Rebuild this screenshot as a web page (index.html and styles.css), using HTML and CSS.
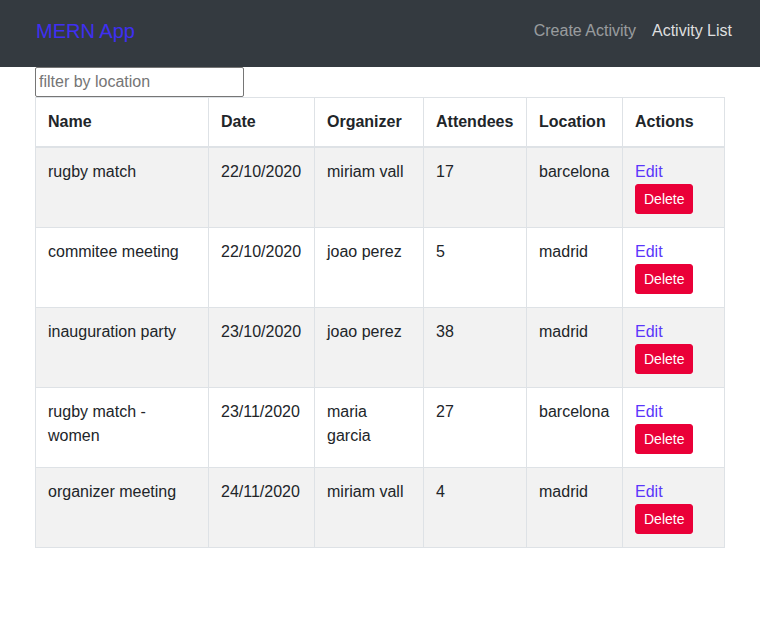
FILE: index.html
```html
<!DOCTYPE html>
<html lang="en">
<head>
<meta charset="utf-8">
<title>MERN App</title>
<link rel="stylesheet" href="styles.css">
</head>
<body>
<nav class="navbar">
  <a class="brand" href="#">MERN App</a>
  <div class="nav-links">
    <a class="nav-link" href="#">Create Activity</a>
    <a class="nav-link active" href="#">Activity List</a>
  </div>
</nav>
<main class="content">
  <input class="filter" type="text" placeholder="filter by location">
  <table class="table">
    <colgroup>
      <col class="c-name"><col class="c-date"><col class="c-org"><col class="c-att"><col class="c-loc"><col class="c-act">
    </colgroup>
    <thead>
      <tr><th>Name</th><th>Date</th><th>Organizer</th><th>Attendees</th><th>Location</th><th>Actions</th></tr>
    </thead>
    <tbody>
      <tr><td>rugby match</td><td>22/10/2020</td><td>miriam vall</td><td>17</td><td>barcelona</td><td><a class="edit" href="#">Edit</a><br><button class="btn-delete">Delete</button></td></tr>
      <tr><td>commitee meeting</td><td>22/10/2020</td><td>joao perez</td><td>5</td><td>madrid</td><td><a class="edit" href="#">Edit</a><br><button class="btn-delete">Delete</button></td></tr>
      <tr><td>inauguration party</td><td>23/10/2020</td><td>joao perez</td><td>38</td><td>madrid</td><td><a class="edit" href="#">Edit</a><br><button class="btn-delete">Delete</button></td></tr>
      <tr><td>rugby match - women</td><td>23/11/2020</td><td>maria garcia</td><td>27</td><td>barcelona</td><td><a class="edit" href="#">Edit</a><br><button class="btn-delete">Delete</button></td></tr>
      <tr><td>organizer meeting</td><td>24/11/2020</td><td>miriam vall</td><td>4</td><td>madrid</td><td><a class="edit" href="#">Edit</a><br><button class="btn-delete">Delete</button></td></tr>
    </tbody>
  </table>
</main>
</body>
</html>
```
FILE: styles.css
```css
* { box-sizing: border-box; }
html, body { margin: 0; padding: 0; }
body {
  font-family: "Liberation Sans", Arial, sans-serif;
  font-size: 16px;
  line-height: 1.5;
  color: #212529;
  background: #fff;
}
.navbar {
  height: 67px;
  background: #343a40;
  display: flex;
  align-items: center;
  justify-content: space-between;
  padding: 0 20px 0 36px;
}
.brand {
  color: #3f2ff2;
  font-size: 20px;
  text-decoration: none;
  line-height: 30px;
  margin-top: -6px;
}
.nav-links { display: flex; margin-top: -6px; }
.nav-link {
  color: rgba(255,255,255,.5);
  text-decoration: none;
  padding: 0 8px;
  line-height: 24px;
}
.nav-link.active { color: rgba(255,255,255,.85); }
.content { padding: 0 35px; }
.filter {
  display: block;
  width: 209px;
  height: 30px;
  font-family: "Liberation Sans", Arial, sans-serif;
  font-size: 16px;
  padding: 1px 3px;
  border: 1px solid #767676;
  border-radius: 2px;
  color: #212529;
}
.filter::placeholder { color: #757575; }
.table {
  width: 689px;
  border-collapse: collapse;
  table-layout: fixed;
}
.c-name { width: 173px; }
.c-date { width: 106px; }
.c-org { width: 109px; }
.c-att { width: 103px; }
.c-loc { width: 96px; }
.c-act { width: 102px; }
.table th, .table td {
  border: 1px solid #dee2e6;
  padding: 12px;
  vertical-align: top;
  text-align: left;
}
.table th { font-weight: 700; }
.table thead th { border-bottom: 2px solid #dee2e6; }
.table tbody tr:nth-child(odd) { background: #f2f2f2; }
.table tbody td { height: 80px; }
.edit {
  color: #5a36fb;
  text-decoration: none;
}
.btn-delete {
  font-family: "Liberation Sans", Arial, sans-serif;
  font-size: 14px;
  line-height: 21px;
  padding: 4px 8px;
  height: 30px;
  width: 58px;
  color: #fff;
  background: #ea0038;
  border: 1px solid #ea0038;
  border-radius: 3px;
  cursor: pointer;
}
```
